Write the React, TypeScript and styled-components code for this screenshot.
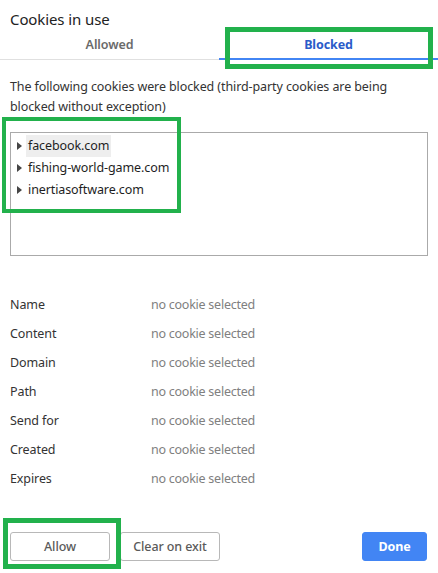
import React from 'react';
import styled, { createGlobalStyle } from 'styled-components';

const GlobalStyle = createGlobalStyle`
    html, body {
        margin: 0;
        padding: 0;
        background: #fff;
    }
    body {
        font-family: "Noto Sans", "Liberation Sans", sans-serif;
        font-size: 12.5px;
        letter-spacing: -0.1px;
        color: #333;
    }
`;

const Dialog = styled.div`
    position: relative;
    width: 438px;
    height: 573px;
    display: flex;
    flex-direction: column;
    overflow: hidden;
`;

const Title = styled.h1`
    margin: 0;
    height: 30px;
    padding: 0 10px;
    font-size: 15px;
    font-weight: 400;
    letter-spacing: -0.1px;
    line-height: 38px;
    color: #222;
`;

const TabBar = styled.div`
    display: flex;
    border-bottom: 1px solid #e0e0e0;
`;

const Tab = styled.div<{ $active?: boolean }>`
    flex: 1;
    height: 28px;
    margin-bottom: -1px;
    display: flex;
    align-items: center;
    justify-content: center;
    font-size: 12.5px;
    font-weight: ${p => (p.$active ? 700 : 600)};
    color: ${p => (p.$active ? '#2a5bc9' : '#6a6a6a')};
    border-bottom: 2px solid ${p => (p.$active ? '#4285f4' : 'transparent')};
`;

const Body = styled.div`
    flex: 1;
    padding: 0 10px;
    display: flex;
    flex-direction: column;
`;

const Description = styled.p`
    margin: 17px 0 0;
    line-height: 20px;
    color: #333;
`;

const ListBox = styled.div`
    margin-top: 15px;
    height: 120px;
    border: 1px solid #aaa;
    padding: 2px 0 0 6px;
`;

const TreeItem = styled.div`
    display: flex;
    align-items: center;
    height: 22px;
`;

const Twisty = styled.span`
    width: 0;
    height: 0;
    border-left: 5px solid #454545;
    border-top: 4px solid transparent;
    border-bottom: 4px solid transparent;
    margin-right: 4px;
`;

const ItemLabel = styled.span<{ $hover?: boolean }>`
    padding: 0 2px;
    line-height: 22px;
    background: ${p => (p.$hover ? '#eeeeee' : 'transparent')};
    color: #1e1e1e;
`;

const Details = styled.div`
    margin-top: 34px;
    display: grid;
    grid-template-columns: 141px 1fr;
    grid-auto-rows: 29px;
    align-items: center;
`;

const DetailLabel = styled.div`
    color: #333;
`;

const DetailValue = styled.div`
    color: #808080;
    letter-spacing: -0.25px;
`;

const Footer = styled.div`
    display: flex;
    align-items: center;
    padding: 0 11px 12px 10px;
    gap: 10px;
`;

const Button = styled.button<{ $primary?: boolean }>`
    height: 29px;
    width: ${p => (p.$primary ? '65px' : '100px')};
    margin-left: ${p => (p.$primary ? 'auto' : '0')};
    padding: 0;
    font-family: inherit;
    font-size: 12.5px;
    letter-spacing: -0.1px;
    font-weight: ${p => (p.$primary ? 700 : 500)};
    color: ${p => (p.$primary ? '#fff' : '#5a5a5a')};
    background: ${p => (p.$primary ? '#4285f4' : '#fff')};
    border: 1px solid ${p => (p.$primary ? '#4285f4' : '#b8b8b8')};
    border-radius: 3px;
`;

const Annotation = styled.div<{ $x: number; $y: number; $w: number; $h: number; $t: number }>`
    position: absolute;
    left: ${p => p.$x}px;
    top: ${p => p.$y}px;
    width: ${p => p.$w}px;
    height: ${p => p.$h}px;
    border: ${p => p.$t}px solid #22b14c;
    box-sizing: border-box;
    pointer-events: none;
`;

const domains = ['facebook.com', 'fishing-world-game.com', 'inertiasoftware.com'];
const fields = ['Name', 'Content', 'Domain', 'Path', 'Send for', 'Created', 'Expires'];

export default function App() {
    return (
        <Dialog>
            <GlobalStyle />
            <Title>Cookies in use</Title>
            <TabBar>
                <Tab>Allowed</Tab>
                <Tab $active>Blocked</Tab>
            </TabBar>
            <Body>
                <Description>
                    The following cookies were blocked (third-party cookies are being blocked without exception)
                </Description>
                <ListBox>
                    {domains.map((d, i) => (
                        <TreeItem key={d}>
                            <Twisty />
                            <ItemLabel $hover={i === 0}>{d}</ItemLabel>
                        </TreeItem>
                    ))}
                </ListBox>
                <Details>
                    {fields.map(f => (
                        <React.Fragment key={f}>
                            <DetailLabel>{f}</DetailLabel>
                            <DetailValue>no cookie selected</DetailValue>
                        </React.Fragment>
                    ))}
                </Details>
            </Body>
            <Footer>
                <Button>Allow</Button>
                <Button>Clear on exit</Button>
                <Button $primary>Done</Button>
            </Footer>
            <Annotation $x={225} $y={27} $w={208} $h={42} $t={5} />
            <Annotation $x={2} $y={117} $w={179} $h={96} $t={4} />
            <Annotation $x={3} $y={518} $w={118} $h={51} $t={5} />
        </Dialog>
    );
}
